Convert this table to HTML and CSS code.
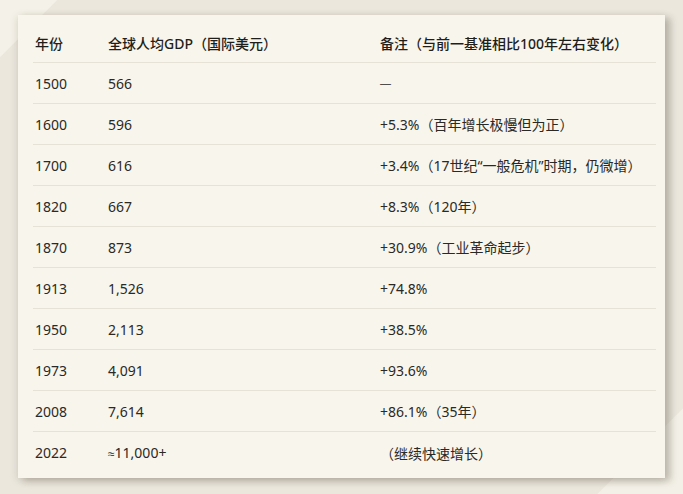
FILE: index.html
```html
<!DOCTYPE html>
<html lang="zh-CN">
<head>
<meta charset="utf-8">
<link rel="stylesheet" href="styles.css">
</head>
<body>
<div class="scene">
  <div class="card">
    <div class="table">
      <div class="row head"><span>年份</span><span>全球人均GDP（国际美元）</span><span>备注（与前一基准相比100年左右变化）</span></div>
      <div class="row"><span>1500</span><span>566</span><span class="dash">—</span></div>
      <div class="row"><span>1600</span><span>596</span><span>+5.3%（百年增长极慢但为正）</span></div>
      <div class="row"><span>1700</span><span>616</span><span>+3.4%（17世纪“一般危机”时期，仍微增）</span></div>
      <div class="row"><span>1820</span><span>667</span><span>+8.3%（120年）</span></div>
      <div class="row"><span>1870</span><span>873</span><span>+30.9%（工业革命起步）</span></div>
      <div class="row"><span>1913</span><span>1,526</span><span>+74.8%</span></div>
      <div class="row"><span>1950</span><span>2,113</span><span>+38.5%</span></div>
      <div class="row"><span>1973</span><span>4,091</span><span>+93.6%</span></div>
      <div class="row"><span>2008</span><span>7,614</span><span>+86.1%（35年）</span></div>
      <div class="row last"><span>2022</span><span><span class="approx">≈</span>11,000+</span><span>（继续快速增长）</span></div>
    </div>
  </div>
</div>
</body>
</html>
```

FILE: styles.css
```css
html, body {
  margin: 0;
  padding: 0;
}
body {
  width: 683px;
  height: 494px;
  overflow: hidden;
  background: #eeeae0;
  font-family: "Noto Sans", "Noto Sans CJK SC", sans-serif;
  color: #2a2926;
}
.scene {
  position: relative;
  width: 683px;
  height: 494px;
  padding: 15px 0 0 18px;
  box-sizing: border-box;
  background:
    linear-gradient(135deg, #f4f1e8 0, #f4f1e8 40px, transparent 41px),
    linear-gradient(315deg, #f3f0e7 0, #f3f0e7 60px, transparent 61px),
    #ebe7dd;
}
.card {
  width: 647px;
  height: 463px;
  box-sizing: border-box;
  background: #f8f5ec;
  padding: 9px 9px 0 15px;
  box-shadow: 0 2px 8px rgba(60, 50, 30, 0.18), 6px 3px 7px rgba(60, 50, 30, 0.22);
}
.table {
  display: flex;
  flex-direction: column;
}
.row {
  display: grid;
  grid-template-columns: 73px 272px 1fr;
  height: 41px;
  align-items: center;
  padding-left: 2px;
  font-size: 14px;
  border-bottom: 1px solid #e7e2d6;
  box-sizing: border-box;
}
.row.head {
  height: 39px;
  font-weight: 500;
  color: #1f1e1b;
}
.row.last {
  border-bottom: none;
}
.approx {
  font-family: "Liberation Sans", sans-serif;
  font-size: 12px;
}
.dash {
  font-family: "Liberation Sans", sans-serif;
  font-size: 11px;
}
```
